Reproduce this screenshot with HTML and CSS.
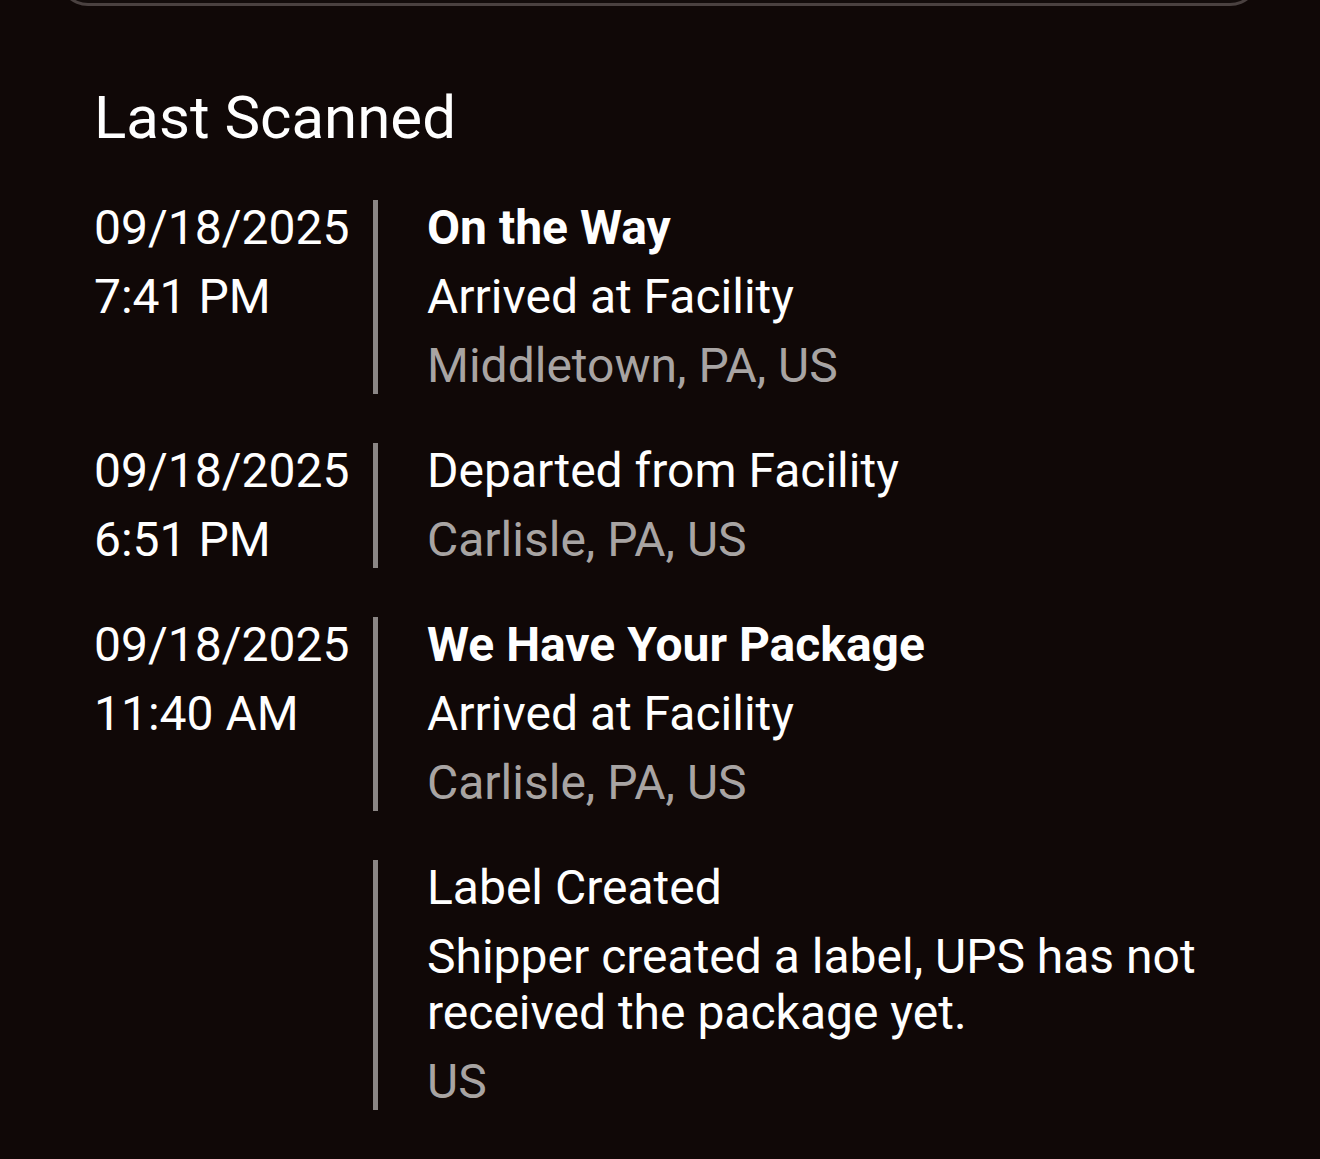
FILE: index.html
```html
<!DOCTYPE html>
<html lang="en">
<head>
<meta charset="utf-8">
<title>Last Scanned</title>
<link rel="stylesheet" href="styles.css">
</head>
<body>
<div class="top-card"></div>
<main class="scans">
  <h2 class="title">Last Scanned</h2>
  <ol class="timeline">
    <li class="event">
      <div class="when"><span>09/18/2025</span><span>7:41 PM</span></div>
      <div class="what">
        <p class="status">On the Way</p>
        <p class="desc">Arrived at Facility</p>
        <p class="loc">Middletown, PA, US</p>
      </div>
    </li>
    <li class="event">
      <div class="when"><span>09/18/2025</span><span>6:51 PM</span></div>
      <div class="what">
        <p class="desc">Departed from Facility</p>
        <p class="loc">Carlisle, PA, US</p>
      </div>
    </li>
    <li class="event">
      <div class="when"><span>09/18/2025</span><span>11:40 AM</span></div>
      <div class="what">
        <p class="status">We Have Your Package</p>
        <p class="desc">Arrived at Facility</p>
        <p class="loc">Carlisle, PA, US</p>
      </div>
    </li>
    <li class="event">
      <div class="when"></div>
      <div class="what">
        <p class="desc">Label Created</p>
        <p class="desc">Shipper created a label, UPS has not received the package yet.</p>
        <p class="loc">US</p>
      </div>
    </li>
  </ol>
</main>
</body>
</html>
```

FILE: styles.css
```css
html, body {
  margin: 0;
  padding: 0;
  background: #100807;
}
body {
  font-family: Roboto, "Liberation Sans", sans-serif;
  color: #ffffff;
  width: 1320px;
  height: 1159px;
  overflow: hidden;
}
.top-card {
  height: 40px;
  margin: -37px 60px 0 58px;
  border: 3px solid #4a4140;
  border-top: none;
  border-radius: 0 0 30px 30px;
  background: #130c0b;
}
.scans {
  padding: 0 0 0 94px;
}
.title {
  margin: 77px 0 0;
  font-size: 60px;
  font-weight: 400;
  line-height: 70px;
}
.timeline {
  list-style: none;
  margin: 47px 0 0;
  padding: 0;
  display: flex;
  flex-direction: column;
  gap: 49px;
}
.event {
  display: grid;
  grid-template-columns: 279px 1fr;
  font-size: 48px;
  line-height: 56px;
}
.when {
  display: flex;
  flex-direction: column;
  gap: 13px;
}
.what {
  border-left: 5px solid #8b8685;
  padding-left: 49px;
  display: flex;
  flex-direction: column;
  gap: 13px;
  padding-right: 110px;
}
.what p {
  margin: 0;
}
.status {
  font-weight: 700;
}
.loc {
  color: #a8a4a3;
}
```
